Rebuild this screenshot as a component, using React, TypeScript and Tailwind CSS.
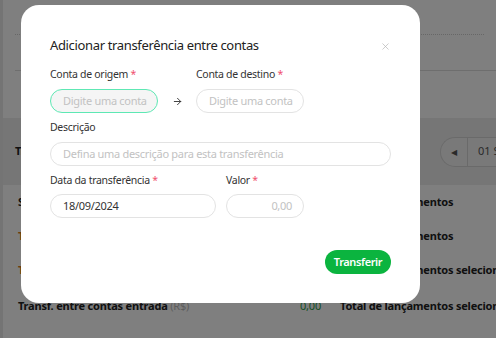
import { ArrowRight, X } from "lucide-react";

const rows = [
  { left: "Saldo inicial (R$)", tone: "text-[#222]", right: "Total de lançamentos" },
  { left: "Total de entradas (R$)", tone: "text-[#d97a1a]", right: "Total de lançamentos" },
  { left: "Total de saídas (R$)", tone: "text-[#d97a1a]", right: "Total de lançamentos selecionados" },
];

function Field({
  placeholder,
  value,
  className,
  focused,
  alignRight,
}: {
  placeholder?: string;
  value?: string;
  className: string;
  focused?: boolean;
  alignRight?: boolean;
}) {
  return (
    <div
      className={`${className} h-6 rounded-full border flex items-center whitespace-nowrap text-[11px] tracking-[-0.3px] ${
        focused ? "border-[#5ee8b4] bg-[#f5f5f5]" : "border-[#e3e3e3] bg-white"
      } ${alignRight ? "justify-end pr-[11px]" : "pl-3"}`}
    >
      {value ? (
        <span className="text-[#333]">{value}</span>
      ) : (
        <span className="text-[#c2c2c2]">{placeholder}</span>
      )}
    </div>
  );
}

function Label({ text, required }: { text: string; required?: boolean }) {
  return (
    <p className="text-[10.5px] leading-4 tracking-[-0.3px] text-[#333] whitespace-nowrap">
      {text} {required && <span className="text-[#f0506e]">*</span>}
    </p>
  );
}

export default function App() {
  return (
    <div className="relative w-[496px] h-[338px] overflow-hidden bg-white font-['Noto_Sans',sans-serif]">
      {/* pagina por baixo do modal */}
      <div className="h-full border-l-[3px] border-[#e8e8e8] flex flex-col">
        <div className="h-[35px] mx-3 border-b border-dotted border-[#cfcfcf] shrink-0" />
        <div className="h-[36px] border-b border-[#dcdcdc] ml-3 shrink-0" />
        <div className="h-[47px] shrink-0" />
        <div className="h-[67px] shrink-0 bg-[#ececec] flex items-center justify-between pl-3">
          <span className="text-[11px] tracking-[-0.2px] font-bold text-[#222]">Transferências</span>
          <div className="h-[30px] w-[56px] rounded-l-full border border-r-0 border-[#d5d5d5] bg-[#f3f3f3] flex items-center text-[11px] text-[#555]">
            <span className="w-[26px] shrink-0 text-center text-[8px]">◀</span>
            <span className="h-full border-l border-[#d5d5d5]" />
            <span className="pl-2.5 whitespace-nowrap">01 Set</span>
          </div>
        </div>
        <div className="flex flex-col pl-[15px]">
          {rows.map((r, i) => (
            <div
              key={i}
              className="h-[34px] shrink-0 flex items-center text-[11px] tracking-[-0.2px] font-bold whitespace-nowrap"
            >
              <span className={`w-[322px] shrink-0 ${r.tone}`}>{r.left}</span>
              <span className="text-[#222]">{r.right}</span>
            </div>
          ))}
          <div className="h-[38px] shrink-0 flex items-center text-[11px] tracking-[-0.2px] font-bold whitespace-nowrap">
            <div className="w-[303px] shrink-0 flex justify-between">
              <span className="text-[#222]">
                Transf. entre contas entrada <span className="font-normal text-[#bbb]">(R$)</span>
              </span>
              <span className="font-normal text-[#2e9e4a]">0,00</span>
            </div>
            <span className="ml-[19px] text-[#222]">Total de lançamentos selecionados</span>
          </div>
        </div>
      </div>

      <div className="absolute inset-0 bg-black/50" />

      {/* modal */}
      <div className="absolute left-[21px] top-[5px] w-[399px] h-[298px] rounded-[18px] bg-white px-[29px] pt-[31px]">
        <div className="flex items-center justify-between h-5">
          <h2 className="text-[13px] tracking-[-0.35px] text-[#222]">Adicionar transferência entre contas</h2>
          <X size={11} strokeWidth={1.5} className="text-[#b5b5b5]" />
        </div>

        <div className="mt-[10px] flex items-end">
          <div className="flex flex-col gap-[7px] w-[108px]">
            <Label text="Conta de origem" required />
            <Field className="w-[108px]" placeholder="Digite uma conta" focused />
          </div>
          <div className="w-[38px] h-6 flex items-center justify-center">
            <ArrowRight size={11} strokeWidth={2} className="text-[#333]" />
          </div>
          <div className="flex flex-col gap-[7px] w-[108px]">
            <Label text="Conta de destino" required />
            <Field className="w-[108px]" placeholder="Digite uma conta" />
          </div>
        </div>

        <div className="mt-[6px] flex flex-col gap-[7px]">
          <Label text="Descrição" />
          <Field className="w-full" placeholder="Defina uma descrição para esta transferência" />
        </div>

        <div className="mt-[6px] flex gap-[10px]">
          <div className="flex flex-col gap-[6px]">
            <Label text="Data da transferência" required />
            <Field className="w-[166px]" value="18/09/2024" />
          </div>
          <div className="flex flex-col gap-[6px]">
            <Label text="Valor" required />
            <Field className="w-[78px]" placeholder="0,00" alignRight />
          </div>
        </div>

        <div className="mt-8 flex justify-end">
          <button className="h-6 w-[66px] rounded-full bg-[#0bb43f] text-white text-[11px] font-semibold tracking-[-0.4px]">
            Transferir
          </button>
        </div>
      </div>
    </div>
  );
}
